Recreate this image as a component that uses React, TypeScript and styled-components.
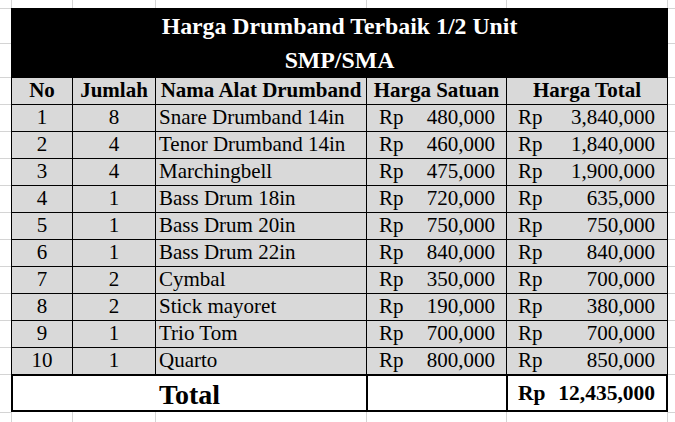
import { Fragment } from "react";
import styled, { createGlobalStyle } from "styled-components";

const GRID = "#d4d4d4";
const FILL = "#d9d9d9";

const GlobalStyle = createGlobalStyle`
  html, body {
    margin: 0;
    padding: 0;
    background: #fff;
  }
  body {
    font-family: "Liberation Serif", "Times New Roman", serif;
    color: #000;
  }
`;

// the whole worksheet, columns and rows as in the spreadsheet
const Sheet = styled.main`
  display: grid;
  width: 100vw;
  height: 100vh;
  overflow: hidden;
  grid-template-columns: 11px 61px 83px 211px 140px 162px 1fr;
  grid-template-rows: 8px 35px 34px repeat(11, 27px) 38px 1fr;
`;

// faint gridlines around the table
const ColStrip = styled.div<{ $row: number }>`
  grid-column: 2 / 7;
  grid-row: ${(p) => p.$row};
  display: grid;
  grid-template-columns: subgrid;
`;
const ColGuide = styled.div`
  border-left: 1px solid ${GRID};
  &:last-child {
    border-right: 1px solid ${GRID};
  }
`;
const RowStrip = styled.div<{ $col: number }>`
  grid-column: ${(p) => p.$col};
  grid-row: 2 / 17;
  display: grid;
  grid-template-rows: subgrid;
`;
const RowGuide = styled.div`
  border-top: 1px solid ${GRID};
`;

const Table = styled.section`
  grid-column: 2 / 7;
  grid-row: 2 / 16;
  display: grid;
  grid-template-columns: subgrid;
  grid-template-rows: subgrid;
`;

const TitleLine = styled.h1`
  grid-column: 1 / -1;
  margin: 0;
  box-sizing: border-box;
  display: flex;
  align-items: flex-end;
  justify-content: center;
  padding-bottom: 4px;
  background: #000;
  color: #fff;
  font-size: 23.8px;
  font-weight: 700;
  line-height: 26px;
  white-space: nowrap;
`;

type CellProps = { $left?: boolean; $head?: boolean; $last?: boolean };
const Cell = styled.div<CellProps>`
  box-sizing: border-box;
  display: flex;
  align-items: flex-end;
  justify-content: ${(p) => (p.$left ? "flex-start" : "center")};
  padding: 0 0 2px ${(p) => (p.$left ? "3px" : "0")};
  background: ${FILL};
  border-left: 1px solid #000;
  border-top: 1px solid #000;
  border-right: ${(p) => (p.$last ? "1px solid #000" : "none")};
  font-size: 21px;
  font-weight: ${(p) => (p.$head ? 700 : 400)};
  line-height: 23px;
  white-space: nowrap;
`;
const MoneyCell = styled(Cell)<{ $pl: number; $pr: number }>`
  justify-content: space-between;
  padding-left: ${(p) => p.$pl}px;
  padding-right: ${(p) => p.$pr}px;
`;

const TotalCell = styled.div<{ $span?: number; $last?: boolean }>`
  grid-column: span ${(p) => p.$span ?? 1};
  box-sizing: border-box;
  display: flex;
  align-items: flex-end;
  background: #fff;
  border: 2px solid #000;
  border-right: ${(p) => (p.$last ? "2px solid #000" : "none")};
  font-weight: 700;
  white-space: nowrap;
`;
const TotalLabel = styled(TotalCell)`
  justify-content: center;
  font-size: 28px;
  line-height: 30px;
`;
const TotalValue = styled(TotalCell)`
  justify-content: space-between;
  padding: 0 11px 5px 10px;
  font-size: 21.5px;
  line-height: 23px;
`;

type Item = { no: number; qty: number; name: string; price: string; total: string };

const items: Item[] = [
  { no: 1, qty: 8, name: "Snare Drumband 14in", price: "480,000", total: "3,840,000" },
  { no: 2, qty: 4, name: "Tenor Drumband 14in", price: "460,000", total: "1,840,000" },
  { no: 3, qty: 4, name: "Marchingbell", price: "475,000", total: "1,900,000" },
  { no: 4, qty: 1, name: "Bass Drum 18in", price: "720,000", total: "635,000" },
  { no: 5, qty: 1, name: "Bass Drum 20in", price: "750,000", total: "750,000" },
  { no: 6, qty: 1, name: "Bass Drum 22in", price: "840,000", total: "840,000" },
  { no: 7, qty: 2, name: "Cymbal", price: "350,000", total: "700,000" },
  { no: 8, qty: 2, name: "Stick mayoret", price: "190,000", total: "380,000" },
  { no: 9, qty: 1, name: "Trio Tom", price: "700,000", total: "700,000" },
  { no: 10, qty: 1, name: "Quarto", price: "800,000", total: "850,000" },
];

const guideCols = [0, 1, 2, 3, 4];
const guideRows = Array.from({ length: 15 }, (_, i) => i);

function App() {
  return (
    <>
      <GlobalStyle />
      <Sheet>
        <ColStrip $row={1}>
          {guideCols.map((c) => <ColGuide key={c} />)}
        </ColStrip>
        <ColStrip $row={16}>
          {guideCols.map((c) => <ColGuide key={c} />)}
        </ColStrip>
        <RowStrip $col={1}>
          {guideRows.map((r) => <RowGuide key={r} />)}
        </RowStrip>
        <RowStrip $col={7}>
          {guideRows.map((r) => <RowGuide key={r} />)}
        </RowStrip>

        <Table>
          <TitleLine>Harga Drumband Terbaik 1/2 Unit</TitleLine>
          <TitleLine>SMP/SMA</TitleLine>

          <Cell $head>No</Cell>
          <Cell $head>Jumlah</Cell>
          <Cell $head>Nama Alat Drumband</Cell>
          <Cell $head>Harga Satuan</Cell>
          <Cell $head $last>Harga Total</Cell>

          {items.map((it) => (
            <Fragment key={it.no}>
              <Cell>{it.no}</Cell>
              <Cell>{it.qty}</Cell>
              <Cell $left>{it.name}</Cell>
              <MoneyCell $pl={12} $pr={11}>
                <span>Rp</span>
                <span>{it.price}</span>
              </MoneyCell>
              <MoneyCell $pl={11} $pr={12} $last>
                <span>Rp</span>
                <span>{it.total}</span>
              </MoneyCell>
            </Fragment>
          ))}

          <TotalLabel $span={3}>Total</TotalLabel>
          <TotalCell />
          <TotalValue $last>
            <span>Rp</span>
            <span>12,435,000</span>
          </TotalValue>
        </Table>
      </Sheet>
    </>
  );
}

export default App;
